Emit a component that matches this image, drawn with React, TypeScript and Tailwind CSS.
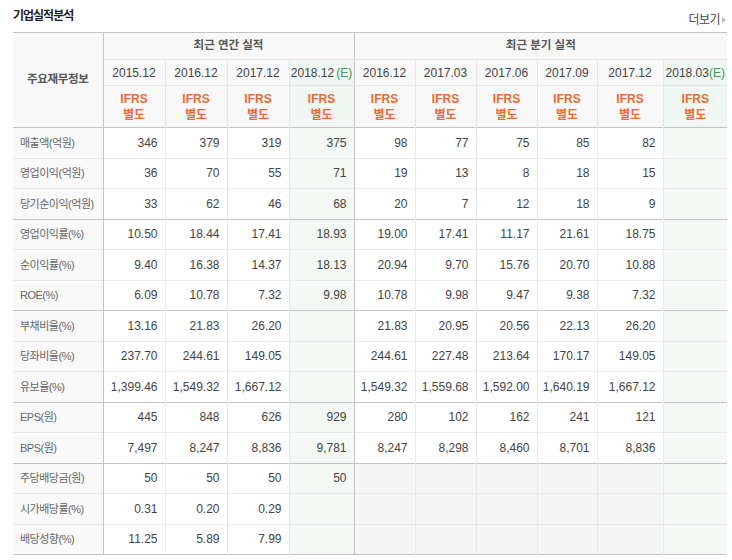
import React from "react";

type Row = {
  label: string;
  annual: string[];
  quarter: string[];
  groupEnd?: boolean;
  noQuarter?: boolean;
};

const rows: Row[] = [
  { label: "매출액(억원)", annual: ["346", "379", "319", "375"], quarter: ["98", "77", "75", "85", "82", ""] },
  { label: "영업이익(억원)", annual: ["36", "70", "55", "71"], quarter: ["19", "13", "8", "18", "15", ""] },
  { label: "당기순이익(억원)", annual: ["33", "62", "46", "68"], quarter: ["20", "7", "12", "18", "9", ""], groupEnd: true },
  { label: "영업이익률(%)", annual: ["10.50", "18.44", "17.41", "18.93"], quarter: ["19.00", "17.41", "11.17", "21.61", "18.75", ""] },
  { label: "순이익률(%)", annual: ["9.40", "16.38", "14.37", "18.13"], quarter: ["20.94", "9.70", "15.76", "20.70", "10.88", ""] },
  { label: "ROE(%)", annual: ["6.09", "10.78", "7.32", "9.98"], quarter: ["10.78", "9.98", "9.47", "9.38", "7.32", ""], groupEnd: true },
  { label: "부채비율(%)", annual: ["13.16", "21.83", "26.20", ""], quarter: ["21.83", "20.95", "20.56", "22.13", "26.20", ""] },
  { label: "당좌비율(%)", annual: ["237.70", "244.61", "149.05", ""], quarter: ["244.61", "227.48", "213.64", "170.17", "149.05", ""] },
  { label: "유보율(%)", annual: ["1,399.46", "1,549.32", "1,667.12", ""], quarter: ["1,549.32", "1,559.68", "1,592.00", "1,640.19", "1,667.12", ""], groupEnd: true },
  { label: "EPS(원)", annual: ["445", "848", "626", "929"], quarter: ["280", "102", "162", "241", "121", ""] },
  { label: "BPS(원)", annual: ["7,497", "8,247", "8,836", "9,781"], quarter: ["8,247", "8,298", "8,460", "8,701", "8,836", ""], groupEnd: true },
  { label: "주당배당금(원)", annual: ["50", "50", "50", "50"], quarter: ["", "", "", "", "", ""], noQuarter: true },
  { label: "시가배당률(%)", annual: ["0.31", "0.20", "0.29", ""], quarter: ["", "", "", "", "", ""], noQuarter: true },
  { label: "배당성향(%)", annual: ["11.25", "5.89", "7.99", ""], quarter: ["", "", "", "", "", ""], noQuarter: true, groupEnd: true },
];

const annualHeads = ["2015.12", "2016.12", "2017.12", "2018.12"];
const quarterHeads = ["2016.12", "2017.03", "2017.06", "2017.09", "2017.12", "2018.03"];

function Ifrs() {
  return (
    <span className="block leading-[16px] font-bold text-[#f0692c]">
      IFRS
      <br />
      별도
    </span>
  );
}

export default function App() {
  return (
    <div className="w-[732px] h-[560px] bg-white pl-[13px] pr-[5px] text-[12px] text-[#444] font-['Liberation_Sans','Noto_Sans_CJK_KR',sans-serif]">
      {/* 제목 */}
      <div className="flex items-end justify-between h-[32px] pb-[6px]">
        <h3 className="text-[12px] font-bold text-[#222] leading-none tracking-[-1px] mb-[4px]">기업실적분석</h3>
        <a className="flex items-center gap-[2px] text-[12px] text-[#444] leading-none tracking-[-0.5px] mr-[1px]">
          더보기
          <span className="w-0 h-0 border-y-[3px] border-y-transparent border-l-[4px] border-l-[#bbb]" />
        </a>
      </div>

      <table className="table-fixed border-collapse w-[714px]">
        <colgroup>
          <col className="w-[90px]" />
          <col className="w-[62px]" />
          <col className="w-[62px]" />
          <col className="w-[62px]" />
          <col className="w-[65px]" />
          <col className="w-[61px]" />
          <col className="w-[61px]" />
          <col className="w-[61px]" />
          <col className="w-[60px]" />
          <col className="w-[66px]" />
          <col className="w-[64px]" />
        </colgroup>
        <thead>
          <tr className="h-[27px] border-t border-t-[#c4c4c4]">
            <th rowSpan={3} className="bg-[#f8f8f8] border-r border-r-[#c4c4c4] font-bold text-[#555] text-[11.5px] tracking-[-0.3px]">
              주요재무정보
            </th>
            <th colSpan={4} className="bg-[#f8f8f8] border-r border-r-[#c4c4c4] border-b border-b-[#e6e6e6] font-bold text-[#555] text-[11.5px]">
              최근 연간 실적
            </th>
            <th colSpan={6} className="bg-[#f8f8f8] border-b border-b-[#e6e6e6] font-bold text-[#555] text-[11.5px]">
              최근 분기 실적
            </th>
          </tr>
          <tr className="h-[26px]">
            {annualHeads.map((h, i) => (
              <th
                key={"a" + h}
                className={
                  "font-normal text-[#444] border-b border-b-[#e6e6e6] whitespace-nowrap " +
                  (i === 3 ? "bg-[#f0f6f1] border-r border-r-[#c4c4c4]" : "bg-[#f8f8f8] border-r border-r-[#e6e6e6]")
                }
              >
                {h}
                {i === 3 && <span className="text-[#3f9a52] ml-[2px]">(E)</span>}
              </th>
            ))}
            {quarterHeads.map((h, i) => (
              <th
                key={"q" + h}
                className={
                  "font-normal text-[#444] border-b border-b-[#e6e6e6] whitespace-nowrap " +
                  (i === 5 ? "bg-[#f0f6f1]" : "bg-[#f8f8f8] border-r border-r-[#e6e6e6]")
                }
              >
                {h}
                {i === 5 && <span className="text-[#3f9a52]">(E)</span>}
              </th>
            ))}
          </tr>
          <tr className="h-[42px] border-b border-b-[#c4c4c4]">
            {Array.from({ length: 10 }).map((_, i) => (
              <th
                key={i}
                className={
                  "font-normal " +
                  (i === 3
                    ? "bg-[#f0f6f1] border-r border-r-[#c4c4c4]"
                    : i === 9
                    ? "bg-[#f0f6f1]"
                    : "bg-[#f8f8f8] border-r border-r-[#e6e6e6]")
                }
              >
                <Ifrs />
              </th>
            ))}
          </tr>
        </thead>
        <tbody>
          {rows.map((r) => (
            <tr
              key={r.label}
              className={
                "h-[30.5px] border-b " + (r.groupEnd ? "border-b-[#c4c4c4]" : "border-b-[#e9e9e9]")
              }
            >
              <td className="bg-[#f9f9f9] border-r border-r-[#c4c4c4] pl-[7px] text-[#666] text-[11px] tracking-[-0.5px] whitespace-nowrap">
                {r.label}
              </td>
              {r.annual.map((v, i) => (
                <td
                  key={"a" + i}
                  className={
                    "text-right pr-[7px] " +
                    (i === 3 ? "bg-[#f4f9f5] border-r border-r-[#c4c4c4]" : "border-r border-r-[#e9e9e9]")
                  }
                >
                  {v}
                </td>
              ))}
              {r.quarter.map((v, i) => (
                <td
                  key={"q" + i}
                  className={
                    "text-right pr-[7px] " +
                    (i === 5
                      ? "bg-[#f4f9f5]"
                      : (r.noQuarter ? "bg-[#f5f5f5] " : "") + "border-r border-r-[#e9e9e9]")
                  }
                >
                  {v}
                </td>
              ))}
            </tr>
          ))}
        </tbody>
      </table>
    </div>
  );
}
